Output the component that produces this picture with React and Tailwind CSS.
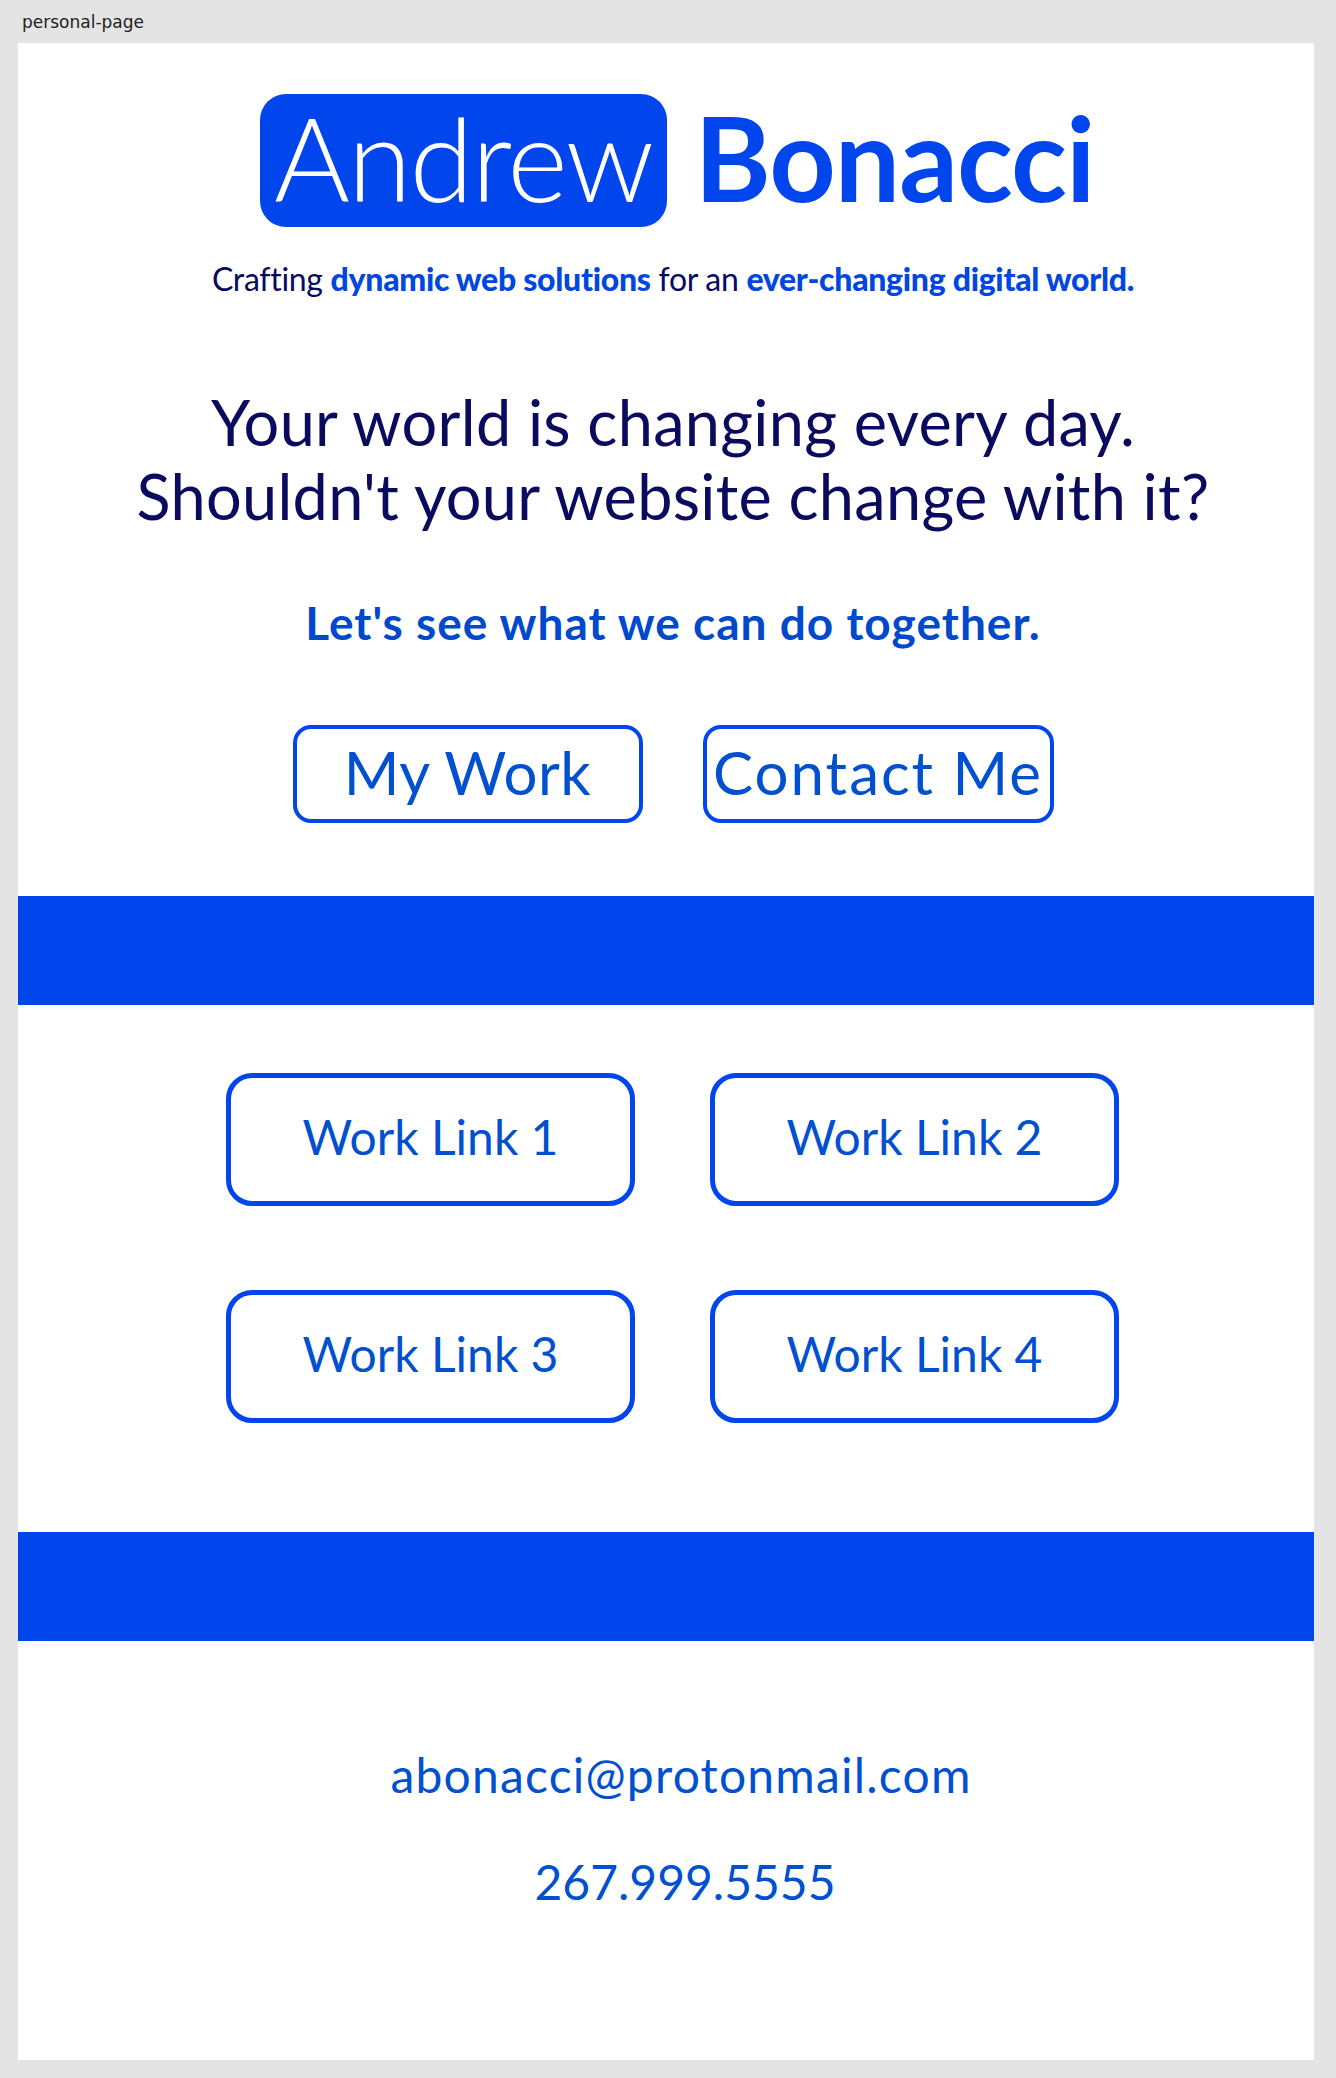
import React from "react";

const workLinks = ["Work Link 1", "Work Link 2", "Work Link 3", "Work Link 4"];

const App = () => {
  return (
    <div className="min-h-[2078px] bg-[#e4e4e4] font-['Lato','Liberation_Sans',sans-serif]">
      {/* window title */}
      <div className="h-[43px] pl-[22px] pt-[12px] text-[17px] leading-[20px] font-medium text-[#222] font-['DejaVu_Sans',sans-serif]">
        personal-page
      </div>

      <div className="ml-[18px] mr-[22px] h-[2017px] bg-white flex flex-col">
        {/* Header */}
        <header className="pt-[51px] pl-[14px] flex flex-col items-center">
          <div className="ml-[8px] flex items-center gap-[28px]">
            <div className="w-[407px] h-[133px] rounded-[26px] bg-[#0046ec] flex items-center justify-center">
              <span className="text-white text-[116px] font-light leading-none tracking-[-2px] -mt-[6px]">
                Andrew
              </span>
            </div>
            <span className="text-[#0046ec] text-[116px] font-bold leading-none tracking-[-1px] -mt-[6px]">
              Bonacci
            </span>
          </div>

          <p className="mt-[34px] text-[32px] leading-[36px] text-[#0a0a5e] tracking-[-0.3px]">
            Crafting{" "}
            <span className="font-black text-[#0046e0]">dynamic web solutions</span>{" "}
            for an{" "}
            <span className="font-black text-[#0046e0]">ever-changing digital world.</span>
          </p>

          <h1 className="mt-[88px] text-[63px] leading-[74px] text-[#0a0a5e] text-center tracking-[0.3px]">
            Your world is changing every day.
            <br />
            Shouldn't your website change with it?
          </h1>

          <h2 className="mt-[64px] text-[46px] leading-[52px] font-bold text-[#0048cc] tracking-[1px]">
            Let's see what we can do together.
          </h2>

          <div className="mt-[76px] flex gap-[60px]">
            <button className="w-[350px] h-[98px] rounded-[18px] border-4 border-[#0046ec] text-[60px] leading-none text-[#0050d0] pb-[4px] tracking-[0.5px]">
              My Work
            </button>
            <button className="w-[351px] h-[98px] rounded-[18px] border-4 border-[#0046ec] text-[60px] leading-none text-[#0050d0] pb-[4px] tracking-[2px]">
              Contact Me
            </button>
          </div>
        </header>

        {/* Band */}
        <div className="mt-[73px] h-[109px] bg-[#0046ec]" />

        {/* Work links */}
        <section className="pt-[68px] pl-[13px] flex justify-center">
          <div className="grid grid-cols-2 gap-x-[75px] gap-y-[84px]">
            {workLinks.map((label) => (
              <a
                key={label}
                href="#"
                className="w-[409px] h-[133px] rounded-[26px] border-[5px] border-[#0046ec] flex items-center justify-center text-[48px] leading-none text-[#0050d0] pb-[6px]"
              >
                {label}
              </a>
            ))}
          </div>
        </section>

        {/* Band */}
        <div className="mt-[109px] h-[109px] bg-[#0046ec]" />

        {/* Contact */}
        <footer className="pl-[30px] flex flex-col items-center text-[#0050d0]">
          <p className="mt-[104px] text-[48px] leading-[60px] tracking-[1.2px]">
            abonacci@protonmail.com
          </p>
          <p className="mt-[47px] pl-[8px] text-[48px] leading-[60px] tracking-[0px]">
            267.999.5555
          </p>
        </footer>
      </div>
    </div>
  );
};

export default App;
